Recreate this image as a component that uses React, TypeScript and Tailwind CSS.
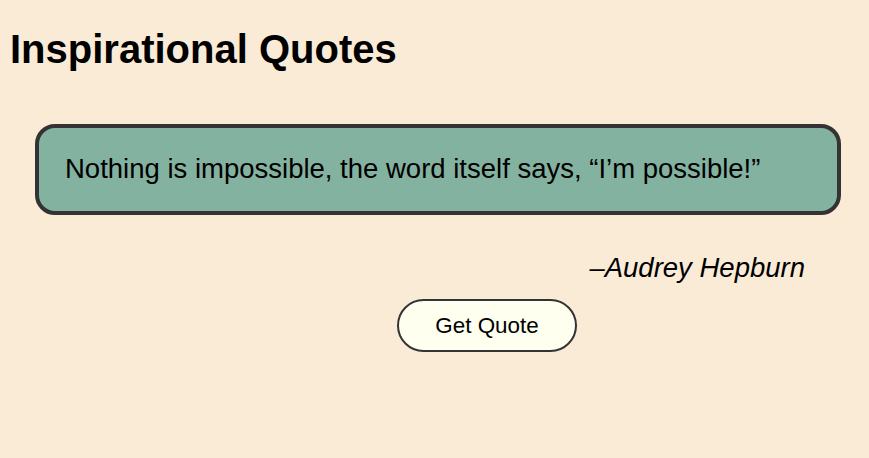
import React from "react";

export default function App() {
  return (
    <div className="min-h-[458px] bg-[#faebd7] p-2 text-black" style={{ fontFamily: '"Liberation Sans", Arial, sans-serif' }}>
      <h1 className="ml-[2px] mt-[18px] text-[40px] font-bold leading-[46px]">Inspirational Quotes</h1>
      <div className="ml-[27px] mr-[20px] mt-[52px] rounded-[20px] border-4 border-[#333333] bg-[#84b2a1] pl-[26px] pr-6 pt-[25px] pb-[26px]">
        <p className="text-[27.5px] leading-[32px]">Nothing is impossible, the word itself says, “I’m possible!”</p>
      </div>
      <p className="mr-[56px] mt-[37px] text-right text-[27.5px] italic leading-[32px]">–Audrey Hepburn</p>
      <button className="ml-[389px] mt-[15px] block h-[53px] w-[180px] rounded-full border-2 border-[#333333] bg-[#fffff0] text-[22.4px] leading-[26px]">
        Get Quote
      </button>
    </div>
  );
}
